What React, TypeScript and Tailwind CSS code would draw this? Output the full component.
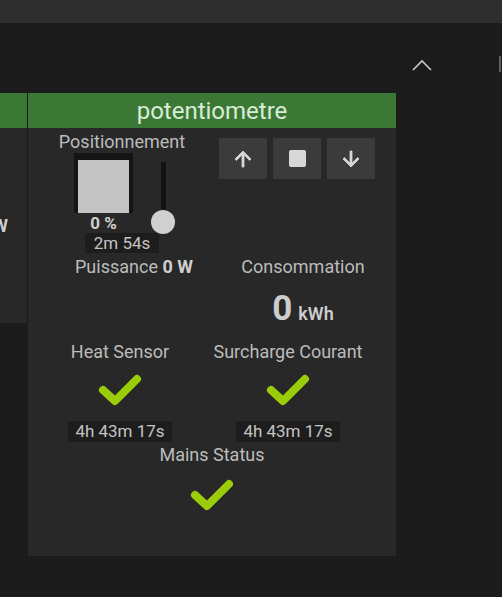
import React from "react";

const font = { fontFamily: "Roboto, 'Noto Sans', sans-serif" };

function Check() {
  return (
    <svg width="44" height="32" viewBox="0 0 44 32" fill="none">
      <polyline
        points="5,16 17,27 39,5"
        stroke="#9acc0a"
        strokeWidth="8"
        strokeLinecap="round"
        strokeLinejoin="round"
      />
    </svg>
  );
}

function Stamp({ children }: { children: React.ReactNode }) {
  return (
    <div className="h-[21px] whitespace-nowrap bg-[#1d1d1d] px-[7px] text-[17px] leading-[21px] text-[#c4c4c4]">
      {children}
    </div>
  );
}

function Btn({ children }: { children: React.ReactNode }) {
  return (
    <button className="flex h-[41px] w-[48px] items-center justify-center bg-[#3b3b3b]">
      {children}
    </button>
  );
}

export default function App() {
  return (
    <div className="h-[597px] w-[502px] overflow-hidden bg-[#1b1b1b]" style={font}>
      {/* barre du haut */}
      <div className="h-[23px] bg-[#2e2e2e]" />

      {/* zone outils */}
      <div className="flex h-[70px] items-start">
        <div className="flex-1" />
        <svg width="20" height="13" viewBox="0 0 20 13" className="mr-[67px] mt-[35px]" fill="none">
          <polyline points="1,12 10,3 19,12" stroke="#c8c8c8" strokeWidth="1.6" />
        </svg>
        <div className="mr-[1px] mt-[33px] h-[16px] w-[2px] bg-[#55606b]" />
      </div>

      <div className="flex items-start gap-[1px]">
        {/* carte de gauche, coupée */}
        <div className="w-[27px]">
          <div className="h-[35px] bg-[#3b7836]" />
          <div className="h-[195px] overflow-hidden bg-[#272727] pt-[87px]">
            <div className="flex justify-end whitespace-nowrap pr-[19px] text-[18px] font-bold leading-[21px] text-[#cfcfcf]">
              0 W
            </div>
          </div>
        </div>

        {/* carte potentiometre */}
        <div className="h-[463px] w-[368px] bg-[#282828]">
          <div className="flex h-[35px] items-center justify-center bg-[#3b7836] text-[24px] leading-[28px] text-[#d9ecd5]">
            potentiometre
          </div>

          {/* ligne 1 */}
          <div className="flex">
            <div className="flex w-[188px] flex-col items-center pt-[3px]">
              <div className="text-[18px] leading-[21px] text-[#bcbcbc]">Positionnement</div>
              <div className="ml-[5px] mt-[1px] flex h-[78px] items-start">
                <div className="flex w-[59px] flex-col items-center">
                  <div className="h-[60px] w-[59px] bg-[#141414] px-[4px] pt-[7px]">
                    <div className="h-full w-full bg-[#c4c4c4]" />
                  </div>
                  <div className="mt-[2px] text-[17px] font-bold leading-[16px] text-[#d0d0d0]">0 %</div>
                </div>
                <div className="ml-[18px] flex w-[24px] flex-col items-center">
                  <div className="mt-[9px] h-[60px] w-[5px] bg-[#121212]" />
                  <div className="-mt-[12px] h-[24px] w-[24px] rounded-full bg-[#d0d0d0]" />
                </div>
              </div>
              <div className="mt-[2px] h-[20px] bg-[#1d1d1d] px-[9px] text-[17px] leading-[20px] text-[#c4c4c4]">
                2m 54s
              </div>
            </div>
            <div className="flex gap-[6px] pl-[3px] pt-[10px]">
              <Btn>
                <svg width="24" height="24" viewBox="0 0 24 24" fill="#d8d8d8">
                  <path d="M4 12l1.41 1.41L11 7.83V20h2V7.83l5.58 5.59L20 12l-8-8-8 8z" stroke="#d8d8d8" strokeWidth="0.8" />
                </svg>
              </Btn>
              <Btn>
                <div className="h-[17px] w-[17px] rounded-[2px] bg-[#d8d8d8]" />
              </Btn>
              <Btn>
                <svg width="24" height="24" viewBox="0 0 24 24" fill="#d8d8d8">
                  <path d="M20 12l-1.41-1.41L13 16.17V4h-2v12.17l-5.58-5.59L4 12l8 8 8-8z" stroke="#d8d8d8" strokeWidth="0.8" />
                </svg>
              </Btn>
            </div>
          </div>

          {/* ligne 2 */}
          <div className="mt-[3px] flex items-start">
            <div className="w-[188px] pl-[47px] text-[18px] leading-[21px] text-[#bcbcbc]">
              Puissance <span className="font-bold text-[#d0d0d0]">0 W</span>
            </div>
            <div className="flex w-[174px] flex-col items-center">
              <div className="text-[18px] leading-[21px] text-[#bcbcbc]">Consommation</div>
              <div className="mt-[14px] flex items-baseline gap-[6px] text-[#cdcdcd]">
                <span className="text-[35px] font-bold leading-[36px]">0</span>
                <span className="text-[18px] font-semibold leading-[21px]">kWh</span>
              </div>
            </div>
          </div>

          {/* ligne 3 */}
          <div className="mt-[14px] flex">
            <div className="flex w-[184px] flex-col items-center">
              <div className="whitespace-nowrap text-[18px] leading-[21px] text-[#bcbcbc]">Heat Sensor</div>
              <div className="mt-[12px]">
                <Check />
              </div>
              <div className="mt-[15px]">
                <Stamp>4h 43m 17s</Stamp>
              </div>
            </div>
            <div className="flex w-[152px] flex-col items-center">
              <div className="whitespace-nowrap text-[18px] leading-[21px] text-[#bcbcbc]">Surcharge Courant</div>
              <div className="mt-[12px]">
                <Check />
              </div>
              <div className="mt-[15px]">
                <Stamp>4h 43m 17s</Stamp>
              </div>
            </div>
          </div>

          {/* ligne 4 */}
          <div className="mt-[2px] flex flex-col items-center">
            <div className="text-[18px] leading-[21px] text-[#bcbcbc]">Mains Status</div>
            <div className="mt-[14px]">
              <Check />
            </div>
          </div>
        </div>
      </div>
    </div>
  );
}
